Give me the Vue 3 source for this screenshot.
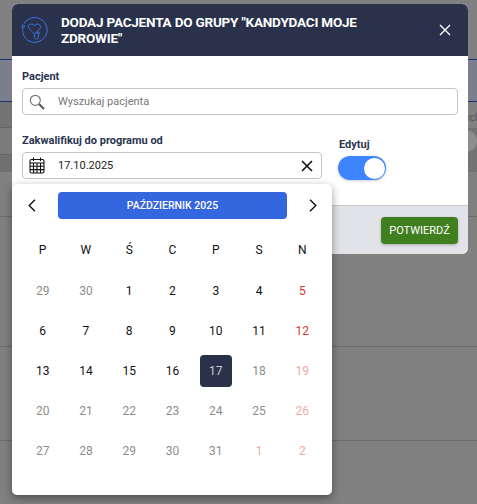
<script setup>
const weekDays = ['P', 'W', 'Ś', 'C', 'P', 'S', 'N'];

// c: muted = other month / disabled, red = sunday, pale = disabled sunday
const days = [
  { n: 29, c: 'muted' }, { n: 30, c: 'muted' }, { n: 1 }, { n: 2 }, { n: 3 }, { n: 4 }, { n: 5, c: 'red' },
  { n: 6 }, { n: 7 }, { n: 8 }, { n: 9 }, { n: 10 }, { n: 11 }, { n: 12, c: 'red' },
  { n: 13 }, { n: 14 }, { n: 15 }, { n: 16 }, { n: 17, c: 'selected' }, { n: 18, c: 'muted' }, { n: 19, c: 'pale' },
  { n: 20, c: 'muted' }, { n: 21, c: 'muted' }, { n: 22, c: 'muted' }, { n: 23, c: 'muted' }, { n: 24, c: 'muted' }, { n: 25, c: 'muted' }, { n: 26, c: 'pale' },
  { n: 27, c: 'muted' }, { n: 28, c: 'muted' }, { n: 29, c: 'muted' }, { n: 30, c: 'muted' }, { n: 31, c: 'muted' }, { n: 1, c: 'pale' }, { n: 2, c: 'pale' }
];
</script>

<template>
  <div class="page">
    <div class="bg-top"></div>
    <div class="bg-band"></div>
    <div class="bg-mid">
      <div class="bg-left">
        <div class="bg-cell cell-a"></div>
        <div class="bg-cell cell-b"></div>
        <div class="bg-cell cell-c"></div>
      </div>
      <div class="bg-right">
        <div class="bg-text">ycl</div>
        <div class="bg-toggle"><i></i></div>
      </div>
    </div>
    <div class="bg-row bg-row-a"></div>
    <div class="bg-row bg-row-b"></div>
    <div class="bg-row bg-row-c"></div>

    <div class="modal">
      <header class="modal-header">
        <svg class="logo" width="28" height="28" viewBox="0 0 28 28" fill="none" stroke="#3f72e8" stroke-width="1">
          <path d="M2.700 8A12.500 12.500 0 1 1 7 24.500C3.500 22 1.600 18.500 1.600 12" />
          <circle cx="2.200" cy="10.200" r="1.300" />
          <path d="M13.500 9.800c-1.500-2.800-6-2.200-6 1 0 2.500 3.500 4.200 6 7.400 2.500-3.200 6-4.900 6-7.400 0-3.200-4.500-3.800-6-1z" />
          <path d="M13.500 18.200v3.300c0 2 3.800 2 3.800-.2v-2.800" />
          <circle cx="17.300" cy="17" r="1.100" />
        </svg>
        <h2 class="title">DODAJ PACJENTA DO GRUPY "KANDYDACI MOJE ZDROWIE"</h2>
        <svg class="close" width="12" height="12" viewBox="0 0 12 12" stroke="#fff" stroke-width="1.400">
          <path d="M1 1l10 10M11 1L1 11" />
        </svg>
      </header>

      <div class="modal-body">
        <label class="label">Pacjent</label>
        <div class="input">
          <svg class="input-icon" width="16" height="16" viewBox="0 0 16 16" fill="none">
            <circle cx="6.300" cy="6.300" r="5" stroke="#777" stroke-width="1.200" />
            <path d="M10 10l5 5" stroke="#555" stroke-width="2" />
          </svg>
          <span class="placeholder">Wyszukaj pacjenta</span>
        </div>

        <div class="form-row">
          <div class="date-col">
            <label class="label">Zakwalifikuj do programu od</label>
            <div class="input">
              <svg class="input-icon" width="16" height="17" viewBox="0 0 16 17" fill="none" stroke="#111" stroke-width="1.100">
                <rect x="1" y="2.500" width="14" height="13.500" rx="1.500" />
                <path d="M1 6h14M1 9.300h14M1 12.600h14M4.500 6v10M8 6v10M11.500 6v10M4.500 .5v3.500M11.500 .5v3.500" />
              </svg>
              <span class="value">17.10.2025</span>
              <svg class="clear" width="12" height="12" viewBox="0 0 12 12" stroke="#111" stroke-width="1.600">
                <path d="M1 1l10 10M11 1L1 11" />
              </svg>
            </div>
          </div>
          <div class="edit-col">
            <label class="label edit-label">Edytuj</label>
            <div class="toggle"><span class="knob"></span></div>
          </div>
        </div>
      </div>

      <footer class="modal-footer">
        <button class="confirm">POTWIERDŹ</button>
      </footer>
    </div>

    <div class="calendar">
      <div class="cal-head">
        <svg class="chev chev-prev" width="8" height="13" viewBox="0 0 8 13" fill="none" stroke="#111" stroke-width="1.400">
          <path d="M7 .7L1.200 6.500 7 12.300" />
        </svg>
        <div class="month">PAŹDZIERNIK 2025</div>
        <svg class="chev chev-next" width="8" height="13" viewBox="0 0 8 13" fill="none" stroke="#111" stroke-width="1.400">
          <path d="M1 .7l5.800 5.800L1 12.300" />
        </svg>
      </div>
      <div class="week">
        <div v-for="(d, i) in weekDays" :key="i" class="week-day">{{ d }}</div>
      </div>
      <div class="days">
        <div v-for="(d, i) in days" :key="i" class="day" :class="d.c">
          <span>{{ d.n }}</span>
        </div>
      </div>
    </div>
  </div>
</template>

<style scoped>
.page {
  position: relative;
  width: 477px;
  height: 504px;
  overflow: hidden;
  background: #808080;
  font-family: Roboto, "Noto Sans", sans-serif;
}

.bg-top {
  height: 59px;
}

.bg-band {
  height: 43px;
  box-sizing: border-box;
  background: #7b7f8d;
  border-top: 1px solid #1f2f70;
  border-bottom: 1px solid #1f2f70;
}

.bg-mid {
  display: flex;
  height: 70px;
}

.bg-left {
  width: 12px;
}

.bg-cell {
  box-sizing: border-box;
  border-bottom: 1px solid #666;
}

.cell-a {
  height: 26px;
  background: #737373;
}

.cell-b {
  height: 27px;
  background: #7b7b7b;
}

.cell-c {
  height: 17px;
  background: #707070;
  border-bottom: 0;
}

.bg-right {
  flex: 1;
  overflow: hidden;
}

.bg-text {
  height: 26px;
  padding-left: 453px;
  font-size: 10px;
  line-height: 32px;
  color: #555;
  white-space: nowrap;
}

.bg-toggle {
  height: 44px;
  box-sizing: border-box;
  padding: 2px 0 0 443px;
  background: #737373;
}

.bg-toggle i {
  display: block;
  width: 22px;
  height: 22px;
  border-radius: 50%;
  background: #8e8e8e;
}

.bg-row {
  box-sizing: border-box;
  border-bottom: 1px solid #6c6c6c;
}

.bg-row-a {
  height: 45px;
}

.bg-row-b {
  height: 130px;
}

.bg-row-c {
  height: 94px;
}

.modal {
  position: absolute;
  top: 4px;
  left: 12px;
  width: 456px;
  border-radius: 6px;
  overflow: hidden;
  background: #fff;
}

.modal-header {
  display: flex;
  align-items: center;
  height: 52px;
  box-sizing: border-box;
  padding: 0 17px 0 9px;
  background: #29324a;
  color: #fff;
}

.logo {
  flex: none;
  margin-right: 12px;
}

.title {
  flex: 1;
  margin: 0;
  padding-right: 40px;
  font-size: 13.5px;
  font-weight: 700;
  letter-spacing: -0.2px;
  line-height: 16px;
}

.close {
  flex: none;
}

.modal-body {
  height: 149px;
  box-sizing: border-box;
  padding: 14px 10px 0;
}

.label {
  display: block;
  margin-bottom: 4px;
  font-size: 11px;
  font-weight: 700;
  line-height: 14px;
  color: #2b3550;
}

.edit-label {
  padding-left: 1px;
}

.input {
  display: flex;
  align-items: center;
  height: 27px;
  box-sizing: border-box;
  padding: 0 8px 0 6px;
  border: 1px solid #c4c4c4;
  border-radius: 4px;
  background: #fff;
}

.input-icon {
  flex: none;
  margin-right: 13px;
}

.placeholder {
  font-size: 11px;
  color: #777;
}

.value {
  flex: 1;
  font-size: 11px;
  color: #222;
}

.form-row {
  display: flex;
  margin-top: 19px;
}

.date-col {
  width: 300px;
}

.edit-col {
  margin: 4px 0 0 16px;
}

.toggle {
  display: flex;
  justify-content: flex-end;
  align-items: center;
  width: 48px;
  height: 24px;
  box-sizing: border-box;
  padding-right: 1px;
  border-radius: 12px;
  background: #3d85ff;
  box-shadow: 0 1px 3px rgba(0, 0, 0, 0.2);
}

.knob {
  width: 21px;
  height: 21px;
  border-radius: 50%;
  background: #fff;
}

.modal-footer {
  display: flex;
  justify-content: flex-end;
  align-items: center;
  height: 49px;
  box-sizing: border-box;
  padding-right: 10px;
  border-top: 1px solid #c8c8c8;
  background: #e1e3e8;
}

.confirm {
  width: 77px;
  height: 27px;
  padding: 0;
  border: 0;
  border-radius: 4px;
  background: #3f7f20;
  color: #fff;
  font-family: inherit;
  font-size: 11px;
  box-shadow: 0 1px 3px rgba(0, 0, 0, 0.25);
}

.calendar {
  position: absolute;
  top: 184px;
  left: 12px;
  width: 320px;
  height: 311px;
  box-sizing: border-box;
  padding-top: 8px;
  border-radius: 5px;
  background: #fff;
  box-shadow: 0 3px 8px rgba(0, 0, 0, 0.4);
}

.cal-head {
  display: grid;
  grid-template-columns: 46px 229px 45px;
  justify-items: center;
  align-items: center;
}

.chev-prev {
  margin-right: 6px;
}

.chev-next {
  margin-left: 6px;
}

.month {
  justify-self: stretch;
  height: 27px;
  border-radius: 4px;
  background: #3466e0;
  color: #fff;
  font-size: 10.5px;
  font-weight: 500;
  line-height: 27px;
  text-align: center;
}

.week,
.days {
  display: grid;
  grid-template-columns: repeat(7, 1fr);
  padding: 0 8px 0 9px;
}

.week {
  margin: 11px 0 1px;
}

.week-day,
.day {
  display: flex;
  justify-content: center;
  align-items: center;
  height: 40px;
  font-size: 12px;
  color: #111;
}

.day.muted {
  color: #8d8d8d;
}

.day.red {
  color: #e0352b;
}

.day.pale {
  color: #f0a8a0;
}

.day.selected span {
  background: #29324a;
  color: #c8ccd6;
}

.day span {
  display: flex;
  justify-content: center;
  align-items: center;
  width: 32px;
  height: 32px;
  border-radius: 4px;
}
</style>
